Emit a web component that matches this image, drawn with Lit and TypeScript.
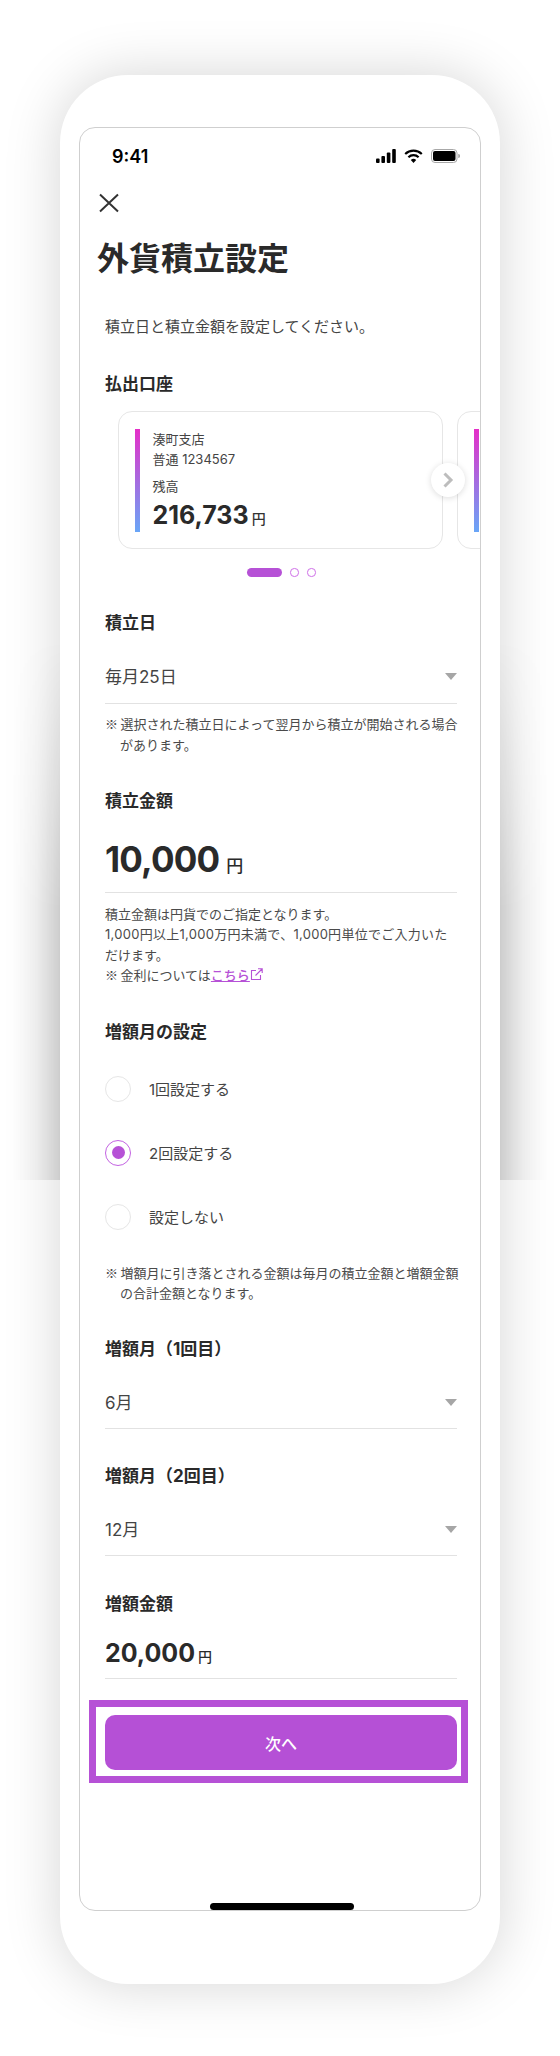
import { LitElement, html, css, svg } from "lit";
import { customElement } from "lit/decorators.js";

const caret = html`<span class="caret"></span>`;
const mark = html`<span class="mark">※</span>`;

@customElement("app-root")
export class AppRoot extends LitElement {
  static styles = css`
    :host {
      display: block;
      position: relative;
      width: 560px;
      height: 2056px;
      overflow: hidden;
      background: #fff;
      font-family: "Inter", "Noto Sans CJK JP", sans-serif;
      color: #333;
      font-size: 15px;
    }
    .band {
      position: absolute;
      left: 0;
      width: 560px;
      top: 640px;
      height: 540px;
      background:
        linear-gradient(to right, rgba(0, 0, 0, 0.12), rgba(0, 0, 0, 0.04) 40%, rgba(0, 0, 0, 0) 80%) right / 60px 100% no-repeat,
        linear-gradient(to left, rgba(0, 0, 0, 0.12), rgba(0, 0, 0, 0.04) 40%, rgba(0, 0, 0, 0) 80%) left / 60px 100% no-repeat;
      -webkit-mask-image: linear-gradient(to bottom, transparent 0, #000 50%);
      mask-image: linear-gradient(to bottom, transparent 0, #000 50%);
    }
    .phone {
      position: relative;
      box-sizing: border-box;
      width: 440px;
      height: 1909px;
      margin: 0 auto;
      top: 75px;
      padding: 52px 19px 0 19px;
      background: #fff;
      border-radius: 68px;
      box-shadow: 0 0 55px rgba(0, 0, 0, 0.17);
    }
    .screen {
      position: relative;
      box-sizing: border-box;
      width: 402px;
      height: 1784px;
      border: 1px solid #cfcfcf;
      border-radius: 16px;
      overflow: hidden;
      background: #fff;
    }
    .status {
      height: 56px;
      display: flex;
      align-items: center;
      justify-content: space-between;
      padding: 0 20px 0 32px;
      color: #000;
      font-size: 18px;
      font-weight: 600;
    }
    .status-icons { display: flex; align-items: center; gap: 8px; }
    .nav { height: 38px; display: flex; align-items: center; padding-left: 18px; }
    .nav svg { display: block; }
    .body { padding: 0 23px 0 25px; }
    h1 {
      margin: 15px 0 0 -8px;
      font-size: 32px;
      line-height: 44px;
      font-weight: 700;
      color: #2a2a2a;
    }
    .desc { margin: 34.5px 0 0; font-size: 15px; line-height: 22px; color: #444; }
    h2 {
      margin: 33px 0 0;
      font-size: 17px;
      line-height: 24px;
      font-weight: 700;
      color: #2a2a2a;
    }
    h2.first { margin-top: 34.7px; }
    h2.dated { margin-top: 34px; }
    h2.total { margin-top: 34px; }
    h2.inc { margin-top: 34.4px; }
    h2.second { margin-top: 34.8px; }
    h2.sum { margin-top: 36px; }
    .cards { position: relative; display: flex; gap: 14px; margin: 14.8px 0 0 13px; width: 400px; }
    .card {
      flex: none;
      box-sizing: border-box;
      width: 325px;
      height: 138px;
      padding: 17px 16px;
      display: flex;
      gap: 13px;
      border: 1.5px solid #e6e6e6;
      border-radius: 14px;
      background: #fff;
    }
    .bar {
      flex: none;
      width: 4.5px;
      height: 103px;
      background: linear-gradient(to bottom, #e52fc8, #69a6f7);
    }
    .line { font-size: 13px; line-height: 20.5px; color: #444; }
    .line.gap { margin-top: 6.5px; margin-bottom: 1px; }
    .balance { display: flex; align-items: baseline; gap: 3px; line-height: 34px; }
    .balance b { font-size: 25px; font-weight: 700; color: #2a2a2a; }
    .balance span { font-size: 14px; font-weight: 500; color: #333; }
    .next {
      position: absolute;
      left: 313px;
      top: 52px;
      width: 34px;
      height: 34px;
      border-radius: 50%;
      background: #fff;
      box-shadow: 0 1px 6px rgba(0, 0, 0, 0.14);
      display: flex;
      align-items: center;
      justify-content: center;
    }
    .dots { display: flex; justify-content: center; align-items: center; gap: 8.5px; margin-top: 19px; height: 9px; }
    .pill { width: 35px; height: 9px; border-radius: 5px; background: #b651d6; }
    .ring { box-sizing: border-box; width: 8.5px; height: 8.5px; border-radius: 50%; border: 1.3px solid #cf6fe8; }
    .select {
      display: flex;
      justify-content: space-between;
      align-items: center;
      padding: 30px 0 14.5px;
      border-bottom: 1.5px solid #e2e2e2;
      font-size: 17px;
      line-height: 24px;
      color: #444;
    }
    .select.tight { padding-bottom: 13.2px; }
    .caret {
      width: 0;
      height: 0;
      border-left: 6.5px solid transparent;
      border-right: 6.5px solid transparent;
      border-top: 7.5px solid #a6a6a6;
    }
    .note {
      margin: 10px 0 0;
      font-size: 13px;
      line-height: 20.5px;
      color: #4a4a4a;
    }
    .note.hang { padding-left: 15px; text-indent: -15px; margin-right: -3px; }
    .note.after-amount { margin-top: 11px; }
    .note.after-radios { margin: 14px -3px 0 0; }
    .wide { letter-spacing: 0.28px; }
    .mark {
      display: inline-block;
      width: 15.5px;
      text-indent: 0;
      font-family: "Noto Sans CJK JP", sans-serif;
      letter-spacing: 0;
    }
    .amount {
      display: flex;
      align-items: baseline;
      border-bottom: 1.5px solid #e2e2e2;
      color: #2a2a2a;
    }
    .amount.big { gap: 7px; padding: 24px 0 3.5px; line-height: 44px; }
    .amount.big b { font-size: 35px; font-weight: 700; letter-spacing: -0.8px; }
    .amount.big span { font-size: 17px; font-weight: 500; }
    .amount.small { gap: 3px; padding: 19.4px 0 2.8px; line-height: 36px; }
    .amount.small b { font-size: 25px; font-weight: 700; }
    .amount.small span { font-size: 14px; font-weight: 500; }
    a { color: #b651d6; text-decoration: underline; font-weight: 500; }
    a svg { vertical-align: -1px; }
    .radios { margin-top: 12.4px; }
    .radio { height: 64px; display: flex; align-items: center; gap: 18px; font-size: 15px; color: #444; }
    .dot {
      flex: none;
      box-sizing: border-box;
      width: 26px;
      height: 26px;
      border-radius: 50%;
      border: 1.5px solid #e6e6e6;
      display: flex;
      align-items: center;
      justify-content: center;
    }
    .dot.on { border-color: #c362e2; }
    .dot.on::after { content: ""; width: 13px; height: 13px; border-radius: 50%; background: #b651d6; }
    .btn-wrap { position: relative; margin-top: 36px; }
    .btn-wrap::after {
      content: "";
      position: absolute;
      inset: -15px -11px -13px -16px;
      border: 7px solid #b651d6;
      pointer-events: none;
    }
    .btn {
      height: 55px;
      border-radius: 10px;
      background: #b550d6;
      color: #fff;
      font-size: 16px;
      font-weight: 500;
      display: flex;
      align-items: center;
      justify-content: center;
    }
    .home {
      position: absolute;
      left: 130px;
      bottom: 0;
      width: 144px;
      height: 7px;
      border-radius: 4px;
      background: #000;
    }
  `;

  private select(label: string, tight = false) {
    return html`<div class="select ${tight ? "tight" : ""}"><span>${label}</span>${caret}</div>`;
  }

  private card(full: boolean) {
    return html`<div class="card">
      <div class="bar"></div>
      ${full
        ? html`<div>
            <div class="line">湊町支店</div>
            <div class="line">普通 1234567</div>
            <div class="line gap">残高</div>
            <div class="balance"><b>216,733</b><span>円</span></div>
          </div>`
        : ""}
    </div>`;
  }

  render() {
    const radios = [
      { label: "1回設定する", on: false },
      { label: "2回設定する", on: true },
      { label: "設定しない", on: false },
    ];
    return html`
      <div class="band"></div>
      <div class="phone">
        <div class="screen">
          <div class="status">
            <span>9:41</span>
            <div class="status-icons">
              <svg width="20" height="14" viewBox="0 0 20 14">
                <rect x="0" y="9.5" width="3.6" height="4.5" rx="1" fill="#000" />
                <rect x="5.4" y="7" width="3.6" height="7" rx="1" fill="#000" />
                <rect x="10.8" y="3.5" width="3.6" height="10.5" rx="1" fill="#000" />
                <rect x="16.2" y="0" width="3.6" height="14" rx="1" fill="#000" />
              </svg>
              <svg width="19" height="14" viewBox="0 0 19 14">
                <path d="M1.2 5 A12 12 0 0 1 17.8 5" fill="none" stroke="#000" stroke-width="2.2" />
                <path d="M4.4 8.2 A7.4 7.4 0 0 1 14.6 8.2" fill="none" stroke="#000" stroke-width="2.2" />
                <path d="M9.5 14 L6.8 11 A4 4 0 0 1 12.2 11 Z" fill="#000" />
              </svg>
              <svg width="29" height="14" viewBox="0 0 29 14">
                <rect x="0.5" y="0.5" width="25.5" height="13" rx="3.5" fill="none" stroke="#a8a8a8" />
                <rect x="2" y="2" width="22.5" height="10" rx="2" fill="#000" />
                <path d="M27.2 5 a2 2 0 0 1 0 4 z" fill="#a8a8a8" />
              </svg>
            </div>
          </div>
          <div class="nav">
            <svg width="22" height="20" viewBox="0 0 22 20">
              <path d="M2 1.5 L20 18.5 M20 1.5 L2 18.5" stroke="#333" stroke-width="2" fill="none" />
            </svg>
          </div>
          <div class="body">
            <h1>外貨積立設定</h1>
            <p class="desc">積立日と積立金額を設定してください。</p>

            <h2 class="first">払出口座</h2>
            <div class="cards">
              ${this.card(true)} ${this.card(false)}
              <div class="next">
                <svg width="12" height="16" viewBox="0 0 12 16">
                  <path d="M2.5 1.5 L9 8 L2.5 14.5" fill="none" stroke="#bdbdbd" stroke-width="3" />
                </svg>
              </div>
            </div>
            <div class="dots">
              <span class="pill"></span><span class="ring"></span><span class="ring"></span>
            </div>

            <h2 class="dated">積立日</h2>
            ${this.select("毎月25日")}
            <p class="note hang">${mark}選択された積立日によって翌月から積立が開始される場合があります。</p>

            <h2 class="total">積立金額</h2>
            <div class="amount big"><b>10,000</b><span>円</span></div>
            <p class="note after-amount">
              積立金額は円貨でのご指定となります。<br />
              <span class="wide">1,000円以上1,000万円未満で、1,000円単位でご入力いた</span><br />だけます。<br />
              ${mark}金利については<a href="#">こちら<svg width="13" height="13" viewBox="0 0 13 13">
                  ${svg`<path d="M6 2.5 H1.5 V11.5 H10.5 V7 M5.5 7.5 L12 1 M8 0.8 H12.2 V5" fill="none" stroke="#b651d6" stroke-width="1.1" />`}
                </svg></a>
            </p>

            <h2 class="inc">増額月の設定</h2>
            <div class="radios">
              ${radios.map(
                (r) => html`<div class="radio">
                  <span class="dot ${r.on ? "on" : ""}"></span><span>${r.label}</span>
                </div>`
              )}
            </div>
            <p class="note hang after-radios">${mark}増額月に引き落とされる金額は毎月の積立金額と増額金額の合計金額となります。</p>

            <h2>増額月（1回目）</h2>
            ${this.select("6月", true)}
            <h2 class="second">増額月（2回目）</h2>
            ${this.select("12月", true)}
            <h2 class="sum">増額金額</h2>
            <div class="amount small"><b>20,000</b><span>円</span></div>

            <div class="btn-wrap"><div class="btn">次へ</div></div>
          </div>
          <div class="home"></div>
        </div>
      </div>
    `;
  }
}
